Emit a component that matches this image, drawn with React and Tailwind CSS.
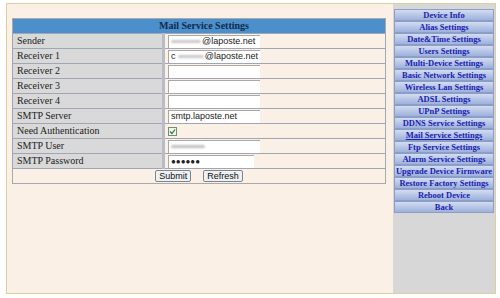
import React from 'react';

const menu = [
  'Device Info',
  'Alias Settings',
  'Date&Time Settings',
  'Users Settings',
  'Multi-Device Settings',
  'Basic Network Settings',
  'Wireless Lan Settings',
  'ADSL Settings',
  'UPnP Settings',
  'DDNS Service Settings',
  'Mail Service Settings',
  'Ftp Service Settings',
  'Alarm Service Settings',
  'Upgrade Device Firmware',
  'Restore Factory Settings',
  'Reboot Device',
  'Back',
];

const rows = [
  { label: 'Sender', value: 'blurred', tail: '@laposte.net' },
  { label: 'Receiver 1', value: 'blurred2', tail: '@laposte.net' },
  { label: 'Receiver 2', value: '' },
  { label: 'Receiver 3', value: '' },
  { label: 'Receiver 4', value: '' },
  { label: 'SMTP Server', value: 'smtp.laposte.net' },
  { label: 'Need Authentication', check: true },
  { label: 'SMTP User', value: 'blurUser' },
  { label: 'SMTP Password', password: true },
];

const serif = { fontFamily: '"Liberation Serif", "Times New Roman", serif' };

const Field = ({ row }) => {
  if (row.check) {
    return (
      <div className="w-[9px] h-[9px] border border-[#7a8a7a] bg-[#eef5ee] flex items-center justify-center">
        <svg width="7" height="7" viewBox="0 0 7 7">
          <path d="M1 3.5 L3 5.5 L6 1.5" stroke="#2d7a2d" strokeWidth="1.2" fill="none" />
        </svg>
      </div>
    );
  }
  const w = row.password ? 'w-[86px]' : 'w-[92px]';
  return (
    <div className={`${w} h-[13px] bg-white border-t border-l border-[#a8a8a8] flex items-center px-[2px] text-[9px] text-[#222] font-['Liberation_Sans',Arial,sans-serif] leading-none`}>
      {row.value === 'blurred' && (
        <>
          <span className="inline-block w-[30px] h-[3px] rounded-full bg-[#c8c8c8] blur-[1px] mr-[1px]" />
          <span>{row.tail}</span>
        </>
      )}
      {row.value === 'blurred2' && (
        <>
          <span>c</span>
          <span className="inline-block w-[30px] h-[3px] ml-[2px] rounded-full bg-[#c8c8c8] blur-[1px] mr-[1px]" />
          <span>{row.tail}</span>
        </>
      )}
      {row.value === 'blurUser' && (
        <span className="inline-block w-[34px] h-[3px] rounded-full bg-[#c0c0c0] blur-[1px]" />
      )}
      {row.value === 'smtp.laposte.net' && <span>smtp.laposte.net</span>}
      {row.password && <span className="text-[8px] tracking-[0px]">●●●●●●</span>}
    </div>
  );
};

export default function App() {
  return (
    <div className="w-[500px] h-[298px] bg-white overflow-hidden pt-[3px] pl-[6px]">
      <div className="w-[490px] h-[291px] border border-[#dccf9f] bg-[#faf0e6] flex">
        <div className="w-[386px] pl-[5px] pt-[14px]">
          <table className="w-[374px] border-collapse border border-[#a9a9a9]" style={serif}>
            <tbody>
              <tr>
                <td colSpan={2} className="h-[15px] bg-[#4b8fcc] text-center text-[10px] font-bold text-[#122a4a] leading-none p-0 pl-[10px]">
                  Mail Service Settings
                </td>
              </tr>
              {rows.map((r) => (
                <tr key={r.label} className="h-[15px]">
                  <td className="w-[151px] bg-[#d9d9d9] border border-[#a0a6b4] pl-[4px] text-[10px] text-[#222] leading-none p-0 border-r-[3px] border-r-[#b8bcc4]">
                    {r.label}
                  </td>
                  <td className="border border-[#a0a6b4] pl-[3px] p-0 align-middle">
                    <Field row={r} />
                  </td>
                </tr>
              ))}
              <tr className="h-[15px]">
                <td colSpan={2} className="p-0">
                  <div className="flex items-center justify-center gap-[12px] font-['Liberation_Sans',Arial,sans-serif]">
                    <button className="h-[12px] px-[3px] border border-[#7c8592] rounded-[2px] bg-[#eef0f2] text-[9px] text-[#111] leading-none">
                      Submit
                    </button>
                    <button className="h-[12px] px-[3px] border border-[#7c8592] rounded-[2px] bg-[#eef0f2] text-[9px] text-[#111] leading-none">
                      Refresh
                    </button>
                  </div>
                </td>
              </tr>
            </tbody>
          </table>
        </div>
        <div className="flex-1 bg-[#d7d7d7] pt-[5px] pl-[1px] pr-[1px]">
          {menu.map((m) => (
            <div
              key={m}
              className="h-[12px] border border-[#8d9ec6] bg-gradient-to-b from-[#d2dcf2] to-[#9fb1dc] flex items-center justify-center text-[8.5px] font-bold text-[#1a22b0] leading-none"
              style={serif}
            >
              <span className={m === 'Mail Service Settings' ? 'underline' : ''}>{m}</span>
            </div>
          ))}
        </div>
      </div>
    </div>
  );
}
